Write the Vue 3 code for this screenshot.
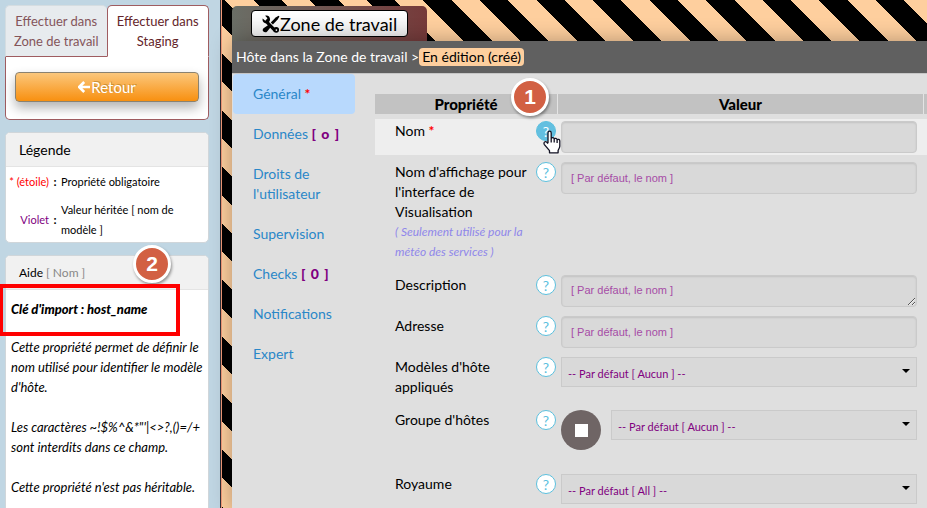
<script setup>
import { ref } from 'vue'

const nav = [
  { label: 'Général', required: true, active: true },
  { label: 'Données', count: 'o' },
  { label: "Droits de l'utilisateur" },
  { label: 'Supervision' },
  { label: 'Checks', count: '0' },
  { label: 'Notifications' },
  { label: 'Expert' },
]

const rows = [
  { id: 'nom', label: 'Nom', type: 'text', required: true, active: true, placeholder: '' },
  {
    id: 'affichage',
    label: "Nom d'affichage pour l'interface de Visualisation",
    note: '( Seulement utilisé pour la météo des services )',
    type: 'text',
    placeholder: '[ Par défaut, le nom ]',
  },
  { id: 'description', label: 'Description', type: 'area', placeholder: '[ Par défaut, le nom ]' },
  { id: 'adresse', label: 'Adresse', type: 'text', placeholder: '[ Par défaut, le nom ]' },
  { id: 'modeles', label: "Modèles d'hôte appliqués", type: 'select', value: '-- Par défaut [ Aucun ] --' },
  { id: 'groupe', label: "Groupe d'hôtes", type: 'select', stop: true, value: '-- Par défaut [ Aucun ] --' },
  { id: 'royaume', label: 'Royaume', type: 'select', value: '-- Par défaut [ All ] --' },
]

const helpKey = ref('Nom')
</script>

<template>
  <div class="app">
    <aside class="sidebar">
      <section class="actions">
        <div class="tabs">
          <button class="tab" type="button">Effectuer dans Zone de travail</button>
          <button class="tab tab-on" type="button">Effectuer dans Staging</button>
        </div>
        <div class="actions-body">
          <button class="back" type="button">
            <svg class="back-icon" viewBox="0 0 12 12" aria-hidden="true">
              <path d="M6.2 1 1.2 6l5 5M1.8 6H12" fill="none" stroke="#fff" stroke-width="2.6" />
            </svg>
            <span>Retour</span>
          </button>
        </div>
      </section>

      <section class="panel">
        <h2 class="panel-head">Légende</h2>
        <dl class="legend">
          <dt class="red">* (étoile)</dt>
          <dd class="colon">:</dd>
          <dd>Propriété obligatoire</dd>
          <dt class="violet">Violet</dt>
          <dd class="colon">:</dd>
          <dd class="inherited">Valeur héritée [ nom de modèle ]</dd>
        </dl>
      </section>

      <section class="panel help-panel">
        <h2 class="panel-head small">Aide <span class="muted">[ {{ helpKey }} ]</span></h2>
        <span class="badge badge-two">2</span>
        <div class="frame"></div>
        <div class="help-text">
          <p class="key">Clé d'import : host_name</p>
          <p>Cette propriété permet de définir le nom utilisé pour identifier le modèle d'hôte.</p>
          <p>Les caractères ~!$%^&amp;*"'|&lt;&gt;?,()=/+ sont interdits dans ce champ.</p>
          <p>Cette propriété n'est pas héritable.</p>
        </div>
      </section>
    </aside>

    <main class="stage">
      <div class="zone-tab">
        <button class="zone" type="button">
          <svg class="tools" viewBox="0 0 17 17" aria-hidden="true">
            <path d="M4.2 6.2 12.4 14.8" stroke="#000" stroke-width="3" />
            <path d="M0.6 3.2 3.1 5.4 5.2 3.1 3 .7C5.300 0 7.800 1.400 7.600 4.500 7.500 6.800 4.600 8.300 2.600 7.500.9 6.800.2 5 .6 3.200Z" />
            <circle cx="13.4" cy="14" r="2.700" />
            <circle cx="13.6" cy="14.200" r=".8" fill="#fff" />
            <path d="M15.600.6 16.500 1.500 14.800 4.200 10.300 9 8.300 7 12.900 2.300Z" />
            <path d="M7 8.700 8.900 10.600 4.900 15.500C3.800 16.700 2.300 16.600 1.300 15.700.4 14.800.4 13.500 1.500 12.500Z" />
          </svg>
          <span>Zone de travail</span>
        </button>
      </div>

      <div class="work">
        <div class="crumbs">
          <span>Hôte dans la Zone de travail &gt;</span>
          <span class="state">En édition (créé)</span>
        </div>

        <div class="content">
          <nav class="nav">
            <a v-for="n in nav" :key="n.label" href="#" class="nav-item" :class="{ on: n.active }">
              {{ n.label }} <b v-if="n.required" class="red">*</b>
              <b v-if="n.count" class="count">[ {{ n.count }} ]</b>
            </a>
          </nav>

          <div class="sheet">
            <table class="props">
              <thead>
                <tr>
                  <th class="col-name">Propriété</th>
                  <th>Valeur</th>
                  <th class="col-end"></th>
                </tr>
              </thead>
              <tbody>
                <tr v-for="r in rows" :key="r.id" :class="{ current: r.active }">
                  <td>
                    <div class="name">
                      <label :for="r.id">
                        {{ r.label }} <b v-if="r.required" class="red">*</b>
                        <i v-if="r.note" class="note">{{ r.note }}</i>
                      </label>
                      <button class="help" :class="{ hover: r.active }" type="button">?</button>
                      <svg v-if="r.active" class="hand" viewBox="0 0 18 24" aria-hidden="true">
                        <path
                          d="M5 13V3c0-2.400 3.200-2.400 3.200 0v5.500c.6-1.300 2.800-1.100 3 .4.800-1 2.700-.7 2.900.8.900-.8 2.700-.3 2.700 1.300v5.300c0 1.600-1.400 3-1.700 4.200V22.800H6.500V20.700L1.400 14.600C.2 12.600 2.100 10.900 3.600 12L5 13.600M8.200 8.500v4M11.200 9v3.500M14.100 10v3"
                          fill="#fff"
                          stroke="#111122"
                          stroke-width="1.300"
                          stroke-linejoin="round"
                        />
                      </svg>
                    </div>
                  </td>
                  <td>
                    <div class="value" :class="{ tall: r.stop }">
                      <input v-if="r.type === 'text'" :id="r.id" class="field" type="text" :placeholder="r.placeholder" />
                      <textarea v-else-if="r.type === 'area'" :id="r.id" class="field area" rows="1" :placeholder="r.placeholder"></textarea>
                      <template v-else>
                        <button v-if="r.stop" class="stop" type="button" aria-label="Stop"></button>
                        <div class="select-box">
                          <select :id="r.id" class="select">
                            <option>{{ r.value }}</option>
                          </select>
                        </div>
                      </template>
                    </div>
                  </td>
                  <td></td>
                </tr>
              </tbody>
            </table>
            <span class="badge badge-one">1</span>
          </div>
        </div>
      </div>
    </main>
  </div>
</template>

<style>
body {
  overflow: hidden;
}
</style>

<style scoped>
* {
  box-sizing: border-box;
}
.app {
  display: flex;
  height: 100vh;
  overflow: hidden;
  font-family: Lato, "Liberation Sans", sans-serif;
  font-size: 14px;
  line-height: 20px;
  color: #000;
  background: #c0d6e3;
}
button,
input,
select,
textarea {
  font-family: inherit;
}
.red {
  color: #f00;
}
.violet {
  color: #800080;
}

.sidebar {
  flex: 0 0 220px;
  display: flex;
  flex-direction: column;
  gap: 12px;
  padding: 5px 11px 0 5px;
}
.tabs {
  display: flex;
}
.tab {
  flex: 1;
  height: 52px;
  padding: 5px 4px;
  border: 1px solid #d5dde1;
  border-bottom-color: #9f5c60;
  border-right: 0;
  border-radius: 5px 5px 0 0;
  background: #e7ebee;
  color: #84555a;
  font-size: 13px;
  line-height: 20px;
}
.tab-on {
  border: 1px solid #9f5c60;
  border-bottom-color: #fff;
  background: #fff;
  color: #642529;
}
.actions-body {
  padding: 15px 9px 17px;
  border: 1px solid #9f5c60;
  border-top: 0;
  border-radius: 0 0 5px 5px;
  background: #fff;
}
.back {
  display: flex;
  align-items: center;
  justify-content: center;
  gap: 1px;
  width: 100%;
  height: 30px;
  padding: 0;
  border: 1px solid #8a8270;
  border-radius: 4px;
  background: linear-gradient(#fbc77c, #f89010);
  box-shadow: 0 6px 12px rgba(0, 0, 0, 0.3);
  color: #fff;
  font-size: 15px;
  text-shadow: 1px -1px 0 rgba(120, 80, 0, 0.35);
}
.back-icon {
  width: 12px;
  height: 12px;
}

.panel {
  position: relative;
  border: 1px solid #d0d6da;
  border-radius: 5px;
  background: #fff;
}
.panel-head {
  margin: 0;
  padding: 7px 13px 6px;
  border-bottom: 1px solid #e4e4e4;
  border-radius: 4px 4px 0 0;
  background: #f1f1f1;
  font-size: 14px;
  font-weight: 400;
  line-height: 20px;
}
.small {
  font-size: 12px;
}
.muted {
  color: #888;
}
.legend {
  display: grid;
  grid-template-columns: 43px 12px 1fr;
  row-gap: 8px;
  align-items: center;
  margin: 0;
  padding: 5px 10px 2px 0;
  font-size: 11px;
}
.legend dt {
  text-align: right;
  white-space: nowrap;
}
.legend dd {
  margin: 0;
}
.legend .inherited {
  padding-right: 20px;
}
.legend .colon {
  text-align: center;
  font-size: 12px;
  font-weight: 700;
}
.help-panel {
  flex: 1 0 auto;
}
.help-text {
  padding: 9px 5px;
  font-size: 13px;
  font-style: italic;
}
.help-text p {
  margin: 0 0 20px;
}
.help-text .key {
  margin-bottom: 18px;
  font-weight: 900;
}
.frame {
  position: absolute;
  left: -7px;
  top: 28px;
  width: 181px;
  height: 52px;
  border: 4px solid #f00;
}
.badge {
  position: absolute;
  display: flex;
  align-items: center;
  justify-content: center;
  width: 38px;
  height: 38px;
  border: 3px solid #fff;
  border-radius: 50%;
  background: #d26043;
  box-shadow: 1px 2px 3px rgba(0, 0, 0, 0.4);
  color: #fff;
  font-family: "Liberation Sans", sans-serif;
  font-size: 21px;
  font-weight: 700;
}
.badge-two {
  left: 127px;
  top: -11px;
}
.badge-one {
  left: 136px;
  top: 4px;
}

.stage {
  flex: 1;
  min-width: 0;
  display: flex;
  flex-direction: column;
  padding: 6px 0 0 10px;
  border-left: 1px solid #33333a;
  box-shadow: inset 1px 0 0 #f39a78;
  background: repeating-linear-gradient(45deg, #000 0 2px, #fecf9e 2px 22px, #000 22px 40px);
}
.zone-tab {
  align-self: flex-start;
  height: 35px;
  margin-left: 1px;
  padding: 4px 19px;
  border-radius: 5px 5px 0 0;
  background: linear-gradient(90deg, #6a6e66, #763a3a);
}
.zone {
  display: flex;
  align-items: center;
  height: 27px;
  padding: 0 10px;
  border: 1px solid #000;
  border-radius: 4px;
  background: linear-gradient(#fff, #ececec);
  color: #000;
  font-size: 18px;
  line-height: 24px;
}
.tools {
  width: 18px;
  height: 18px;
}
.work {
  flex: 1;
  display: flex;
  flex-direction: column;
  margin-left: 1px;
  background: #dfdfdf;
  box-shadow: 0 0 20px rgba(0, 0, 0, 0.3);
}
.crumbs {
  display: flex;
  align-items: center;
  height: 32px;
  padding-left: 4px;
  background: #606060;
  color: #fff;
  font-size: 14px;
}
.state {
  padding: 0 3px;
  height: 18px;
  border-radius: 4px;
  background: #fecf9e;
  color: #000;
  line-height: 17px;
}
.content {
  flex: 1;
  display: flex;
  border-top: 1px solid #c6c6c6;
}
.nav {
  flex: 0 0 143px;
  padding: 0 20px 0 1px;
}
.nav-item {
  display: block;
  padding: 10px 12px 10px 20px;
  border-radius: 4px;
  color: #2a87c8;
  text-decoration: none;
}
.on {
  background: #b8d9fd;
}
.count {
  color: #800080;
  font-weight: 900;
  white-space: nowrap;
  word-spacing: 2px;
}
.sheet {
  position: relative;
  flex: 1;
  min-width: 0;
  padding-top: 15px;
}
.props {
  width: 100%;
  table-layout: fixed;
  border-collapse: separate;
  border-spacing: 0 5px;
}
.props th {
  height: 20px;
  padding: 0;
  border-left: 1px solid #e4e4e4;
  background: #c2c2c2;
  font-size: 15px;
  font-weight: 900;
  line-height: 20px;
}
.props th.col-name {
  width: 182px;
  border-left: 0;
}
.props th.col-end {
  width: 4px;
}
.props td {
  padding: 2px 0;
  vertical-align: top;
}
.current td {
  background: #eee;
}
.name {
  position: relative;
  display: flex;
  justify-content: space-between;
  padding: 0 1px 4px 20px;
}
.name label {
  width: 135px;
}
.note {
  display: block;
  color: #8f87ea;
  font-size: 12px;
}
.help {
  flex: none;
  width: 20px;
  height: 20px;
  padding: 0;
  border: 1px solid #5bc0de;
  border-radius: 50%;
  background: #fff;
  color: #5bc0de;
  font-size: 14px;
  line-height: 17px;
}
.hover {
  background: #63bfe0;
  color: #fff;
}
.hand {
  position: absolute;
  left: 168px;
  top: 9px;
  width: 18px;
  height: 24px;
}
.value {
  display: flex;
  gap: 10px;
  padding: 0 6px 0 4px;
}
.tall {
  padding-bottom: 15px;
}
.field {
  flex: 1;
  min-width: 0;
  height: 32px;
  padding: 4px 9px;
  border: 1px solid #cacaca;
  border-radius: 4px;
  background: #d9d9d9;
  box-shadow: inset 0 1px 2px rgba(0, 0, 0, 0.1);
  font-family: "Liberation Sans", sans-serif;
  font-size: 11px;
  line-height: 20px;
}
.field::placeholder {
  color: #a64ca6;
  opacity: 1;
}
.area {
  resize: vertical;
}
.select-box {
  position: relative;
  flex: 1;
}
.select-box::after {
  content: "";
  position: absolute;
  right: 7px;
  top: 12px;
  border: 4px solid transparent;
  border-top-color: #000;
  border-bottom: 0;
  pointer-events: none;
}
.select {
  display: block;
  appearance: none;
  width: 100%;
  height: 30px;
  padding: 3px 6px 0;
  border: 1px solid #cacaca;
  border-radius: 0;
  background: #d9d9d9;
  color: #800080;
  font-size: 11px;
}
.stop {
  display: grid;
  place-items: center;
  width: 40px;
  height: 40px;
  padding: 0;
  border: 0;
  border-radius: 50%;
  background: #6f6565;
}
.stop::before {
  content: "";
  width: 13px;
  height: 13px;
  background: #fff;
}
</style>
